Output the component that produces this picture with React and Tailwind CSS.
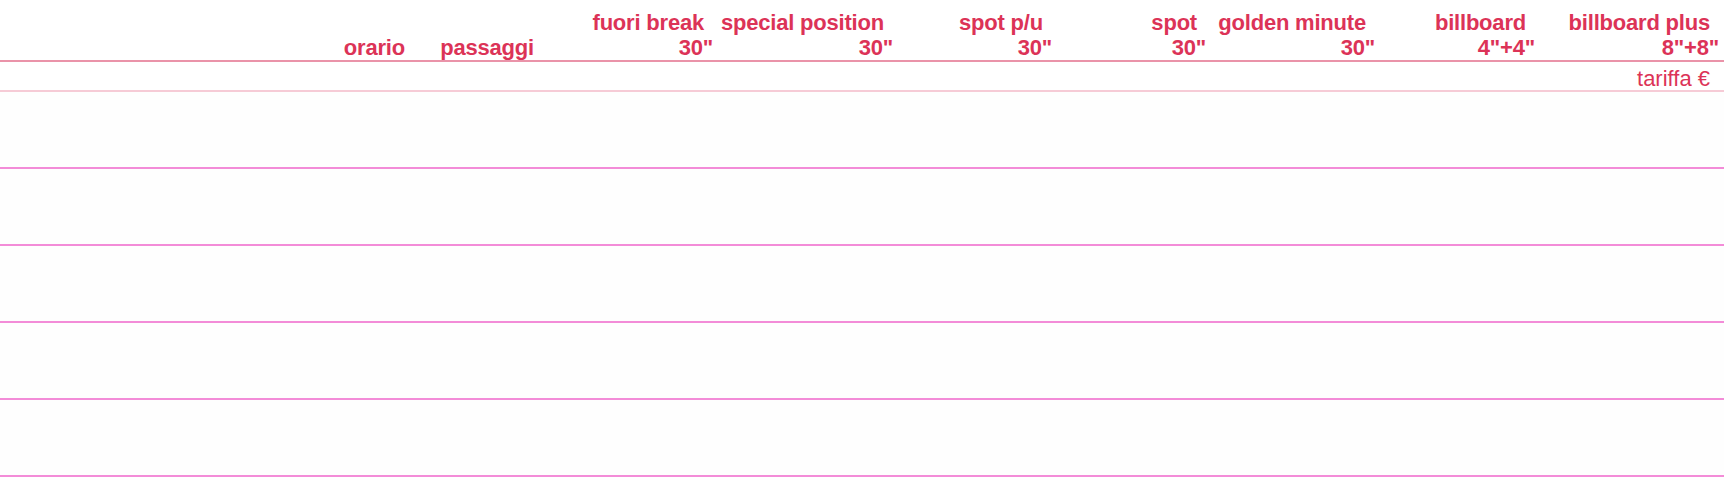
const columns = [
  { label: "", value: "orario" },
  { label: "", value: "passaggi" },
  { label: "fuori break", value: "30\"" },
  { label: "special position", value: "30\"" },
  { label: "spot p/u", value: "30\"" },
  { label: "spot", value: "30\"" },
  { label: "golden minute", value: "30\"" },
  { label: "billboard", value: "4\"+4\"" },
  { label: "billboard plus", value: "8\"+8\"" },
];

const grid =
  "grid grid-cols-[272px_133px_129px_179px_180px_159px_154px_169px_160px_184px_1fr]";

const RateTable = () => {
  const rows = [0, 1, 2, 3, 4];

  return (
    <div className="w-full bg-white font-['Liberation_Sans',Arial,sans-serif] text-[#dc3357]">
      <div className={`${grid} h-[62px] pt-[10px] border-b-2 border-[#ea93a9] text-[22px] font-bold leading-[25px] tracking-[-0.2px]`}>
        <div />
        {columns.map((col, i) => (
          <div key={i} className="flex flex-col items-end whitespace-nowrap">
            <div className="h-[25px] pr-[9px]">{col.label}</div>
            <div className="h-[25px]">{col.value}</div>
          </div>
        ))}
        <div />
      </div>

      <div className="flex justify-end h-[30px] pt-[4px] pr-[14px] border-b-2 border-[#f6cbd6] text-[22px] font-light leading-[25px]">
        tariffa €
      </div>

      {rows.map((r) => (
        <div key={r} className={`${grid} h-[77px] border-b-2 border-[#f38cd8] bg-[#fefefe]`}>
          <div />
        </div>
      ))}
    </div>
  );
};

export default function App() {
  return <RateTable />;
}
